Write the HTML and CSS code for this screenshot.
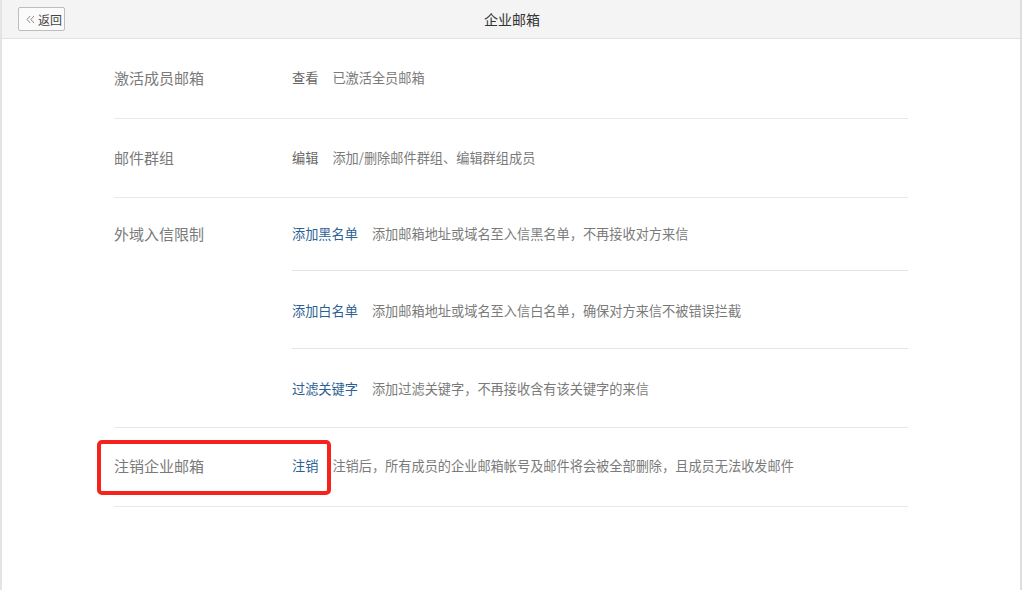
FILE: index.html
```html
<!DOCTYPE html>
<html lang="zh-CN">
<head>
<meta charset="utf-8">
<title>企业邮箱</title>
<link rel="stylesheet" href="styles.css">
</head>
<body>
<div class="frame">
  <div class="header">
    <div class="header-left">
      <a class="back-btn" href="#">
        <svg class="back-icon" width="9" height="9" viewBox="0 0 9 9" aria-hidden="true">
          <path d="M4.2 1 L1 4.5 L4.2 8 M8 1 L4.8 4.5 L8 8" fill="none" stroke="#8a8a8a" stroke-width="1"/>
        </svg>
        <span>返回</span>
      </a>
    </div>
    <div class="title">企业邮箱</div>
    <div class="header-right"></div>
  </div>

  <div class="content">
    <div class="row row-first">
      <div class="label">激活成员邮箱</div>
      <div class="body">
        <div class="item"><span class="action">查看</span><span class="desc">已激活全员邮箱</span></div>
      </div>
    </div>

    <div class="row">
      <div class="label">邮件群组</div>
      <div class="body">
        <div class="item"><span class="action">编辑</span><span class="desc">添加/删除邮件群组、编辑群组成员</span></div>
      </div>
    </div>

    <div class="row row-group">
      <div class="label label-group">外域入信限制</div>
      <div class="body">
        <div class="item sub sub-first"><a class="link" href="#">添加黑名单</a><span class="desc">添加邮箱地址或域名至入信黑名单，不再接收对方来信</span></div>
        <div class="item sub"><a class="link" href="#">添加白名单</a><span class="desc">添加邮箱地址或域名至入信白名单，确保对方来信不被错误拦截</span></div>
        <div class="item sub sub-last"><a class="link" href="#">过滤关键字</a><span class="desc">添加过滤关键字，不再接收含有该关键字的来信</span></div>
      </div>
    </div>

    <div class="row row-last">
      <div class="label">注销企业邮箱</div>
      <div class="body">
        <div class="item"><a class="link" href="#">注销</a><span class="desc">注销后，所有成员的企业邮箱帐号及邮件将会被全部删除，且成员无法收发邮件</span></div>
      </div>
      <div class="highlight"></div>
    </div>
  </div>
</div>
</body>
</html>
```

FILE: styles.css
```css
* { box-sizing: border-box; }
html, body {
  margin: 0;
  padding: 0;
  background: #ffffff;
}
body {
  font-family: "Noto Sans CJK SC", "Liberation Sans", sans-serif;
  color: #777;
}
.frame {
  width: 1022px;
  height: 590px;
  border-left: 2px solid #e4e4e4;
  border-right: 2px solid #dedede;
  background: #fff;
}
.header {
  height: 39px;
  background: #f4f4f4;
  border-bottom: 1px solid #dde3e9;
  display: grid;
  grid-template-columns: 1fr auto 1fr;
  align-items: center;
}
.header-left {
  padding-left: 16px;
  display: flex;
  align-items: center;
}
.back-btn {
  display: flex;
  align-items: center;
  gap: 3px;
  height: 24px;
  width: 47px;
  padding: 0 0 0 7px;
  border: 1px solid #bdbdbd;
  border-radius: 2px;
  background: #fbfbfb;
  color: #444;
  font-size: 12px;
  text-decoration: none;
}
.back-icon { display: block; }
.title {
  font-size: 14px;
  color: #333;
  padding-left: 2px;
}
.content {
  padding-left: 112px;
  width: 906px;
}
.row {
  display: flex;
  border-bottom: 1px solid #e8e8e8;
  position: relative;
}
.label {
  width: 178px;
  flex: none;
  font-size: 15px;
  line-height: 18px;
  padding: 30px 0;
  color: #7a7a7a;
}
.label-group { padding-top: 27px; }
.body { flex: 1; }
.item {
  display: flex;
  align-items: center;
  font-size: 13.2px;
  line-height: 18px;
  padding: 30px 0;
  white-space: nowrap;
}
.row-first .item { padding-bottom: 31px; }
.sub {
  padding: 31px 0 28px;
  border-bottom: 1px solid #e6e6de;
}
.sub-first { padding: 27px 0 27px; }
.sub-last { border-bottom: none; padding: 31px 0 29px; }
.row-last .label { padding: 29px 0 31px; }
.row-last .item { padding: 29px 0 31px; }
.action { color: #666; }
.link {
  color: #2c5f93;
  text-decoration: none;
}
.desc {
  margin-left: 14px;
  color: #7a7a7a;
}
.highlight {
  position: absolute;
  left: -17px;
  top: 12px;
  width: 234px;
  height: 55px;
  border: 4px solid #f5231c;
  border-radius: 5px;
  pointer-events: none;
}
```
